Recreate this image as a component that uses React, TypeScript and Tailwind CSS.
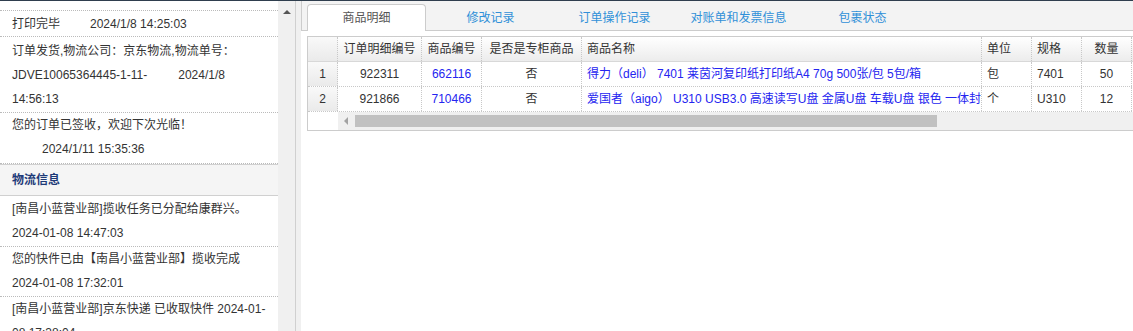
type Entry = {
  lines: { text: string; indent?: number }[];
  pt: string;
  pb: string;
};

type Col = {
  title: string;
  w: string;
  align: "center" | "left";
};

const orderLog: Entry[] = [
  {
    lines: [{ text: "打印完毕" }],
    pt: "pt-px",
    pb: "pb-0",
  },
  {
    lines: [
      { text: "订单发货,物流公司：京东物流,物流单号：" },
      { text: "JDVE10065364445-1-11-" },
      { text: "14:56:13" },
    ],
    pt: "pt-[2px]",
    pb: "pb-px",
  },
  {
    lines: [{ text: "您的订单已签收，欢迎下次光临！" }, { text: "2024/1/11 15:35:36", indent: 30 }],
    pt: "pt-0",
    pb: "pb-[2px]",
  },
];

const logistics = [
  ["[南昌小蓝营业部]揽收任务已分配给康群兴。", "2024-01-08 14:47:03"],
  ["您的快件已由【南昌小蓝营业部】揽收完成", "2024-01-08 17:32:01"],
  ["[南昌小蓝营业部]京东快递 已收取快件 2024-01-", "08 17:38:04"],
];

const cols: Col[] = [
  { title: "订单明细编号", w: "w-[84px]", align: "center" },
  { title: "商品编号", w: "w-[60px]", align: "center" },
  { title: "是否是专柜商品", w: "w-[100px]", align: "center" },
  { title: "商品名称", w: "w-[400px]", align: "left" },
  { title: "单位", w: "w-[50px]", align: "left" },
  { title: "规格", w: "w-[50px]", align: "left" },
  { title: "数量", w: "w-[50px]", align: "center" },
];

const rows = [
  {
    no: "1",
    cells: ["922311", "662116", "否", "得力（deli） 7401 莱茵河复印纸打印纸A4 70g 500张/包 5包/箱", "包", "7401", "50"],
  },
  {
    no: "2",
    cells: ["921866", "710466", "否", "爱国者（aigo） U310 USB3.0 高速读写U盘 金属U盘 车载U盘 银色 一体封", "个", "U310", "12"],
  },
];

const tabs = ["商品明细", "修改记录", "订单操作记录", "对账单和发票信息", "包裹状态"];

function LeftPanel() {
  return (
    <div className="flex w-[295px] shrink-0">
      <div className="w-[278px] bg-white text-[12px] leading-[24px] text-[#333]">
        <div className="h-[10px] border-b border-dotted border-[#bbb]" />
        <div className="flex border-b border-dotted border-[#bbb] px-3 pt-px">
          <span>打印完毕</span>
          <span className="ml-[30px]">2024/1/8 14:25:03</span>
        </div>
        {orderLog.slice(1).map((entry, i) => (
          <div key={i} className={`border-b border-dotted border-[#bbb] px-3 ${entry.pt} ${entry.pb}`}>
            {entry.lines.map((line, j) =>
              i === 0 && j === 1 ? (
                <div key={j} className="flex whitespace-nowrap">
                  <span>{line.text}</span>
                  <span className="ml-[31px]">2024/1/8</span>
                </div>
              ) : (
                <div
                  key={j}
                  className={`whitespace-nowrap ${line.indent ? "pl-[30px]" : ""}`}
                >
                  {line.text}
                </div>
              )
            )}
          </div>
        ))}
        <div className="flex h-[32px] items-center border-y border-[#d0d0d0] bg-[#f5f5f5] px-3 font-bold text-[#1e3a78]">
          物流信息
        </div>
        {logistics.map(([msg, time], i) => (
          <div
            key={i}
            className={`border-b border-dotted border-[#bbb] px-3 ${i === 0 ? "pt-px pb-px" : "pt-0 pb-px"}`}
          >
            <div className="whitespace-nowrap">{msg}</div>
            <div className="whitespace-nowrap">{time}</div>
          </div>
        ))}
      </div>
      <div className="flex w-[17px] justify-center bg-[#f0f0f0]">
        <div className="mt-[9px] h-0 w-0 border-x-[4px] border-b-[4px] border-x-transparent border-b-[#555]" />
      </div>
    </div>
  );
}

function Tabs() {
  return (
    <div className="flex h-[30px] items-end border-b border-l border-[#ccc] bg-[#f3f3f3] pl-[5px]">
      {tabs.map((t, i) =>
        i === 0 ? (
          <div
            key={t}
            className="-mb-px mr-[5px] flex h-[27px] w-[119px] shrink-0 items-center justify-center rounded-t-[4px] border border-b-0 border-[#ccc] bg-white text-[#555]"
          >
            {t}
          </div>
        ) : (
          <div
            key={t}
            className="-mb-px mr-[5px] flex h-[27px] w-[119px] shrink-0 items-center justify-center text-[#3090d8]"
          >
            {t}
          </div>
        )
      )}
    </div>
  );
}

function GoodsTable() {
  return (
    <div className="ml-[6px] mt-[5px] w-[1000px] border border-[#ccc] bg-white">
      <div className="flex h-[25px] border-b border-[#d8d8d8] bg-linear-to-b from-white to-[#ececec] text-[#333]">
        <div className="w-[30px] shrink-0 border-r border-dotted border-[#c8c8c8] bg-linear-to-b from-[#f9f9f9] to-[#eaeaea]" />
        {cols.map((c) => (
          <div
            key={c.title}
            className={`${c.w} flex shrink-0 items-center whitespace-nowrap border-r border-dotted border-[#c8c8c8] px-[5px] ${
              c.align === "center" ? "justify-center" : ""
            }`}
          >
            {c.title}
          </div>
        ))}
        <div className="flex-1" />
      </div>
      {rows.map((r) => (
        <div key={r.no} className="flex h-[25px] border-b border-dotted border-[#c8c8c8]">
          <div className="flex w-[30px] shrink-0 items-center justify-center border-r border-dotted border-[#c8c8c8] bg-linear-to-b from-[#f9f9f9] to-[#eaeaea] text-[#333]">
            {r.no}
          </div>
          {r.cells.map((v, i) => (
            <div
              key={i}
              className={`${cols[i].w} flex shrink-0 items-center overflow-hidden whitespace-nowrap border-r border-dotted border-[#c8c8c8] ${
                i === 3 ? "pl-[5px] pr-0" : "px-[5px]"
              } ${cols[i].align === "center" ? "justify-center" : ""} ${
                i === 1 || i === 3 ? "text-[#2424f0]" : "text-[#333]"
              }`}
            >
              {v}
            </div>
          ))}
          <div className="flex-1" />
        </div>
      ))}
      <div className="flex h-[18px]">
        <div className="w-[30px] shrink-0 bg-white" />
        <div className="flex flex-1 items-center bg-[#f0f0f0]">
          <div className="ml-[6px] h-0 w-0 border-y-[4px] border-r-[4px] border-y-transparent border-r-[#a3a3a3]" />
          <div className="ml-[7px] h-[12px] w-[582px] bg-[#c1c1c1]" />
        </div>
      </div>
    </div>
  );
}

export default function App() {
  return (
    <div className="h-[331px] w-[1133px] overflow-hidden bg-white font-['Liberation_Sans','Noto_Sans_CJK_SC',sans-serif] text-[12px]">
      <div className="h-px bg-[#2f3e4e]" />
      <div className="flex h-[330px]">
        <LeftPanel />
        <div className="w-[6px] shrink-0 border-l border-[#d0d0d0] bg-[#f0f0f0]" />
        <div className="flex-1 overflow-hidden bg-white">
          <Tabs />
          <GoodsTable />
        </div>
      </div>
    </div>
  );
}
